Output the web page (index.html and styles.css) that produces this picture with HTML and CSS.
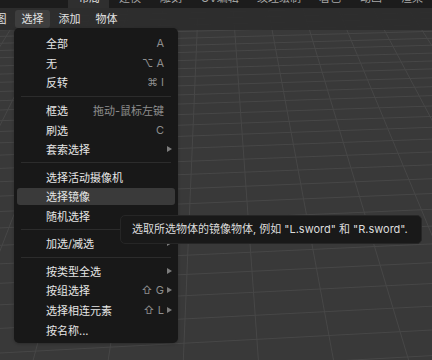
FILE: index.html
```html
<!DOCTYPE html>
<html lang="zh">
<head>
<meta charset="utf-8">
<title>选择菜单</title>
<link rel="stylesheet" href="styles.css">
</head>
<body>
<div class="app">
  <div class="topbar">
    <div class="tab"><span>布局</span></div>
    <div class="tab"><span>建模</span></div>
    <div class="tab"><span>雕刻</span></div>
    <div class="tab"><span>UV编辑</span></div>
    <div class="tab"><span>纹理绘制</span></div>
    <div class="tab"><span>着色</span></div>
    <div class="tab"><span>动画</span></div>
    <div class="tab"><span>渲染</span></div>
  </div>
  <div class="stage">
    <svg class="grid" viewBox="0 8 432 352" width="432" height="352" aria-hidden="true">
      <g stroke="#474747" stroke-width="1" fill="none">
        <line x1="23.5" y1="8" x2="-192" y2="360"/>
        <line x1="58.5" y1="8" x2="-117" y2="360"/>
        <line x1="93.4" y1="8" x2="-42" y2="360"/>
        <line x1="128.3" y1="8" x2="33.2" y2="360"/>
        <line x1="163.2" y1="8" x2="108.2" y2="360"/>
        <line x1="198.1" y1="8" x2="183.3" y2="360"/>
        <line x1="233.1" y1="8" x2="258.4" y2="360"/>
        <line x1="268" y1="8" x2="333.5" y2="360"/>
        <line x1="302.9" y1="8" x2="408.6" y2="360"/>
        <line x1="337.8" y1="8" x2="483.7" y2="360"/>
        <line x1="372.7" y1="8" x2="558.8" y2="360"/>
        <line x1="407.7" y1="8" x2="633.9" y2="360"/>

        <line x1="0" y1="17.6" x2="432" y2="6.5"/>
        <line x1="0" y1="23.6" x2="432" y2="12.4"/>
        <line x1="0" y1="29.9" x2="432" y2="18.4"/>
        <line x1="0" y1="36.4" x2="432" y2="24.7"/>
        <line x1="0" y1="43.3" x2="432" y2="31.3"/>
        <line x1="0" y1="50.5" x2="432" y2="38.3"/>
        <line x1="0" y1="57.7" x2="432" y2="45.2"/>
        <line x1="0" y1="65.9" x2="432" y2="53.1"/>
        <line x1="0" y1="74.1" x2="432" y2="61"/>
        <line x1="0" y1="82.3" x2="432" y2="68.9"/>
        <line x1="0" y1="91.5" x2="432" y2="77.8"/>
        <line x1="0" y1="100.7" x2="432" y2="86.7"/>
        <line x1="0" y1="110" x2="432" y2="95.6"/>
        <line x1="0" y1="120.7" x2="432" y2="106"/>
        <line x1="0" y1="131.5" x2="432" y2="116.4"/>
        <line x1="0" y1="142.8" x2="432" y2="127.3"/>
        <line x1="0" y1="155.1" x2="432" y2="139.1"/>
        <line x1="0" y1="168.4" x2="432" y2="152"/>
        <line x1="0" y1="181.7" x2="432" y2="164.8"/>
        <line x1="0" y1="196.1" x2="432" y2="178.7"/>
        <line x1="0" y1="211.5" x2="432" y2="193.5"/>
        <line x1="0" y1="227.9" x2="432" y2="209.3"/>
        <line x1="0" y1="245.3" x2="432" y2="226.1"/>
        <line x1="0" y1="263.8" x2="432" y2="243.9"/>
        <line x1="0" y1="283.3" x2="432" y2="262.7"/>
        <line x1="0" y1="304.8" x2="432" y2="283.5"/>
        <line x1="0" y1="328.4" x2="432" y2="306.2"/>
        <line x1="0" y1="353" x2="432" y2="330"/>
        <line x1="0" y1="379.7" x2="432" y2="355.6"/>
      </g>
    </svg>

    <div class="header">
      <div class="hitem">视图</div>
      <div class="hitem active">选择</div>
      <div class="hitem">添加</div>
      <div class="hitem">物体</div>
    </div>

    <div class="menu">
      <div class="row"><span class="label">全部</span><span class="key">A</span><span class="sub"></span></div>
      <div class="row"><span class="label">无</span><span class="key">⌥ A</span><span class="sub"></span></div>
      <div class="row"><span class="label">反转</span><span class="key">⌘ I</span><span class="sub"></span></div>
      <div class="sep"></div>
      <div class="row"><span class="label">框选</span><span class="key">拖动-鼠标左键</span><span class="sub"></span></div>
      <div class="row"><span class="label">刷选</span><span class="key">C</span><span class="sub"></span></div>
      <div class="row"><span class="label">套索选择</span><span class="key"></span><span class="sub"><svg viewBox="0 0 5 6" width="5" height="6"><polygon points="0,0 5,3 0,6" fill="#7c7c7c"/></svg></span></div>
      <div class="sep"></div>
      <div class="row"><span class="label">选择活动摄像机</span><span class="key"></span><span class="sub"></span></div>
      <div class="row hover"><span class="label">选择镜像</span><span class="key"></span><span class="sub"></span></div>
      <div class="row"><span class="label">随机选择</span><span class="key"></span><span class="sub"></span></div>
      <div class="sep"></div>
      <div class="row"><span class="label">加选/减选</span><span class="key"></span><span class="sub"><svg viewBox="0 0 5 6" width="5" height="6"><polygon points="0,0 5,3 0,6" fill="#7c7c7c"/></svg></span></div>
      <div class="sep"></div>
      <div class="row"><span class="label">按类型全选</span><span class="key"></span><span class="sub"><svg viewBox="0 0 5 6" width="5" height="6"><polygon points="0,0 5,3 0,6" fill="#7c7c7c"/></svg></span></div>
      <div class="row"><span class="label">按组选择</span><span class="key">⇧ G</span><span class="sub"><svg viewBox="0 0 5 6" width="5" height="6"><polygon points="0,0 5,3 0,6" fill="#7c7c7c"/></svg></span></div>
      <div class="row"><span class="label">选择相连元素</span><span class="key">⇧ L</span><span class="sub"><svg viewBox="0 0 5 6" width="5" height="6"><polygon points="0,0 5,3 0,6" fill="#7c7c7c"/></svg></span></div>
      <div class="row"><span class="label">按名称...</span><span class="key"></span><span class="sub"></span></div>
    </div>

    <div class="tooltip">选取所选物体的镜像物体, 例如 "L.sword" 和 "R.sword".</div>
  </div>
</div>
</body>
</html>
```

FILE: styles.css
```css
* { box-sizing: border-box; }

html, body {
  margin: 0;
  padding: 0;
  width: 432px;
  height: 360px;
  overflow: hidden;
  background: #393939;
}

body {
  font-family: "Inter", "DejaVu Sans", "Noto Sans CJK SC", sans-serif;
  font-size: 11px;
  color: #e4e4e4;
}

.app {
  display: flex;
  flex-direction: column;
  width: 432px;
  height: 360px;
}

.topbar {
  display: flex;
  height: 8px;
  padding-left: 68px;
  background: #1c1c1c;
  overflow: hidden;
  flex: none;
}

.tab {
  height: 8px;
  padding: 0 10px;
  overflow: hidden;
  color: #a8a8a8;
  line-height: 12px;
  white-space: nowrap;
}

.tab span {
  display: block;
  margin-top: -8px;
}

.tab:first-child {
  background: #2f2f2f;
  color: #e0e0e0;
}

.stage {
  position: relative;
  flex: 1;
  overflow: hidden;
  background: #393939;
}

.grid {
  position: absolute;
  left: 0;
  top: 0;
  display: block;
}

.header {
  position: relative;
  display: flex;
  gap: 2px;
  height: 22px;
  padding-top: 2px;
  margin-left: -22px;
  background: rgba(44, 44, 44, 0.93);
}

.hitem {
  width: 35px;
  height: 18px;
  line-height: 18px;
  text-align: center;
  border-radius: 3px;
  color: #e2e2e2;
}

.hitem.active {
  background: #3e3e3e;
}

.menu {
  position: absolute;
  left: 14px;
  top: 20px;
  width: 164px;
  display: flex;
  flex-direction: column;
  padding: 5px 0 3px;
  background: #181818;
  border-radius: 5px;
  box-shadow: 0 1px 3px rgba(0, 0, 0, 0.25);
}

.row {
  display: grid;
  grid-template-columns: 1fr auto 11px;
  align-items: center;
  height: 17px;
  margin: 1.4px 3px;
  padding-left: 29px;
  border-radius: 3px;
  white-space: nowrap;
  color: #e6e6e6;
}

.row.hover {
  background: #3a3a3a;
}

.key {
  color: #8e8e8e;
  text-align: right;
}

.sub {
  display: flex;
  justify-content: flex-end;
  align-items: center;
  padding-right: 3px;
}

.sub svg {
  display: block;
}

.sep {
  height: 1px;
  margin: 3.25px 7px;
  background: #2c2c2c;
  flex: none;
}

.tooltip {
  position: absolute;
  left: 120px;
  top: 207px;
  width: 302px;
  height: 29px;
  padding-left: 11px;
  line-height: 27px;
  background: #191919;
  border: 1px solid #262626;
  border-radius: 5px;
  color: #dcdcdc;
  white-space: nowrap;
}
```
